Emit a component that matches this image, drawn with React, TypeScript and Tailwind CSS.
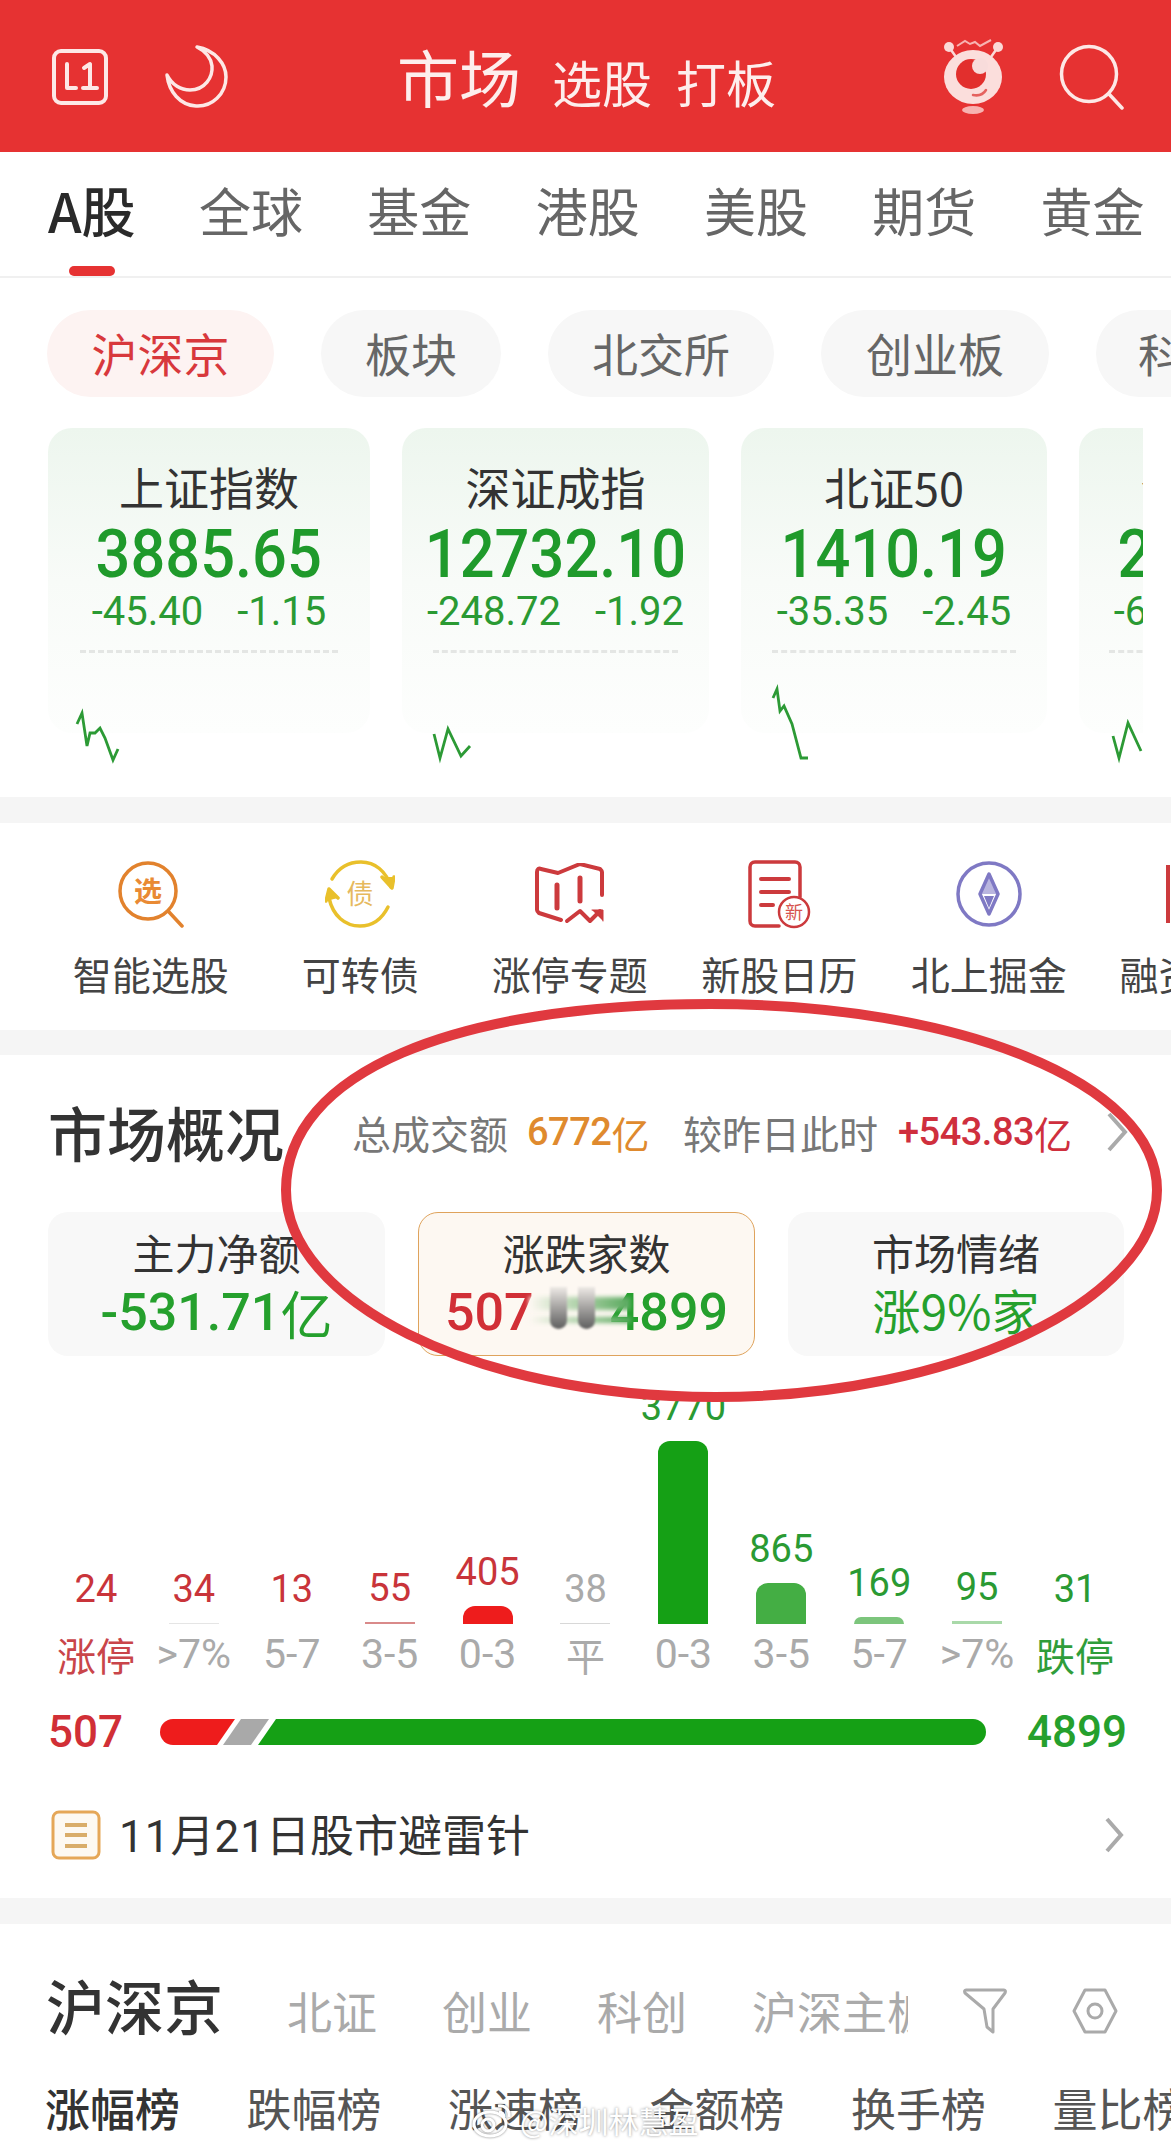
import React from "react";

const NUM = "font-['Roboto',sans-serif] font-medium";
const NUMR = "font-['Roboto',sans-serif] font-normal";

function L1Icon() {
  return (
    <svg width="58" height="58" viewBox="0 0 58 58" fill="none" stroke="#fde8e6" strokeWidth="4" strokeLinecap="round" strokeLinejoin="round">
      <rect x="3" y="3" width="52" height="52" rx="7" />
      <path d="M16 16v24h9M33 20l6-4v24M32 40h14" />
    </svg>
  );
}
function MoonIcon() {
  return (
    <svg width="66" height="66" viewBox="0 0 66 66" fill="none" stroke="#fde8e6" strokeWidth="3.5" strokeLinecap="round" strokeLinejoin="round">
      <path d="M33 3C51 6 62 20 62 33c0 17-14 30-30 29C16 61 5 48 3 31c5 10 14 15 23 15 15 0 23-13 22-24C47 14 41 7 33 3Z" />
    </svg>
  );
}
function MascotIcon() {
  return (
    <svg width="62" height="76" viewBox="0 0 62 76" fill="none">
      <path d="M14 7l8-5 5 3 5-2 5 4 11-6" stroke="#f7b3b1" strokeWidth="2" />
      <path d="M6 8l7 10M55 8l-7 10" stroke="#fbd9d7" strokeWidth="2.5" />
      <circle cx="6" cy="8" r="5" fill="#fbd9d7" />
      <circle cx="55" cy="8" r="5" fill="#fbd9d7" />
      <ellipse cx="30" cy="38" rx="29" ry="27" fill="#fbdedc" />
      <circle cx="28" cy="35" r="15" fill="#e22f2d" />
      <circle cx="37" cy="27" r="8" fill="#f8dcdb" />
      <path d="M30 56c5 1 10 0 13-5" stroke="#e5625f" strokeWidth="2.5" strokeLinecap="round" />
      <ellipse cx="30" cy="71" rx="11" ry="4" fill="#f7b3b1" />
    </svg>
  );
}
function SearchIcon() {
  return (
    <svg width="66" height="66" viewBox="0 0 66 66" fill="none" stroke="#fde8e6" strokeWidth="3.5" strokeLinecap="round">
      <circle cx="30" cy="30" r="27.5" />
      <path d="M50 50l13 14" />
    </svg>
  );
}

function Spark({ w, h, pts }: { w: number; h: number; pts: string }) {
  return (
    <svg width={w} height={h} viewBox={`0 0 ${w} ${h}`} fill="none" className="block overflow-visible">
      <polyline points={pts} stroke="#2c9a35" strokeWidth="2.8" strokeLinejoin="miter" />
    </svg>
  );
}

const cards = [
  { title: "上证指数", v: "3885.65", a: "-45.40", b: "-1.15", w: "w-[322px]", pts: "29,23 34,12 39,45 42,32 47,32 52,27 57,37 65,59 70,48" },
  { title: "深证成指", v: "12732.10", a: "-248.72", b: "-1.92", w: "w-[307px]", pts: "32,33 38,57 46,28 59,55 68,45" },
  { title: "北证50", v: "1410.19", a: "-35.35", b: "-2.45", w: "w-[306px]", pts: "32,-3 36,-12 39,10 43,5 51,23 60,57 67,57" },
  { title: "创业板指", v: "2920.05", a: "-67.24", b: "-2.02", w: "w-[304px]", pts: "34,35 40,57 49,22 62,50" },
];

function Card({ c }: { c: (typeof cards)[number] }) {
  return (
    <div className={`${c.w} shrink-0 h-[305px] rounded-[24px] bg-gradient-to-b from-[#edf6ee] via-[#f8fbf8] to-[#fdfefd] flex flex-col items-center pt-[36px]`}>
      <div className="text-[45px] leading-[46px] text-[#333]">{c.title}</div>
      <div className={`${NUM} inline-block scale-x-[.93] text-[66px] leading-[66px] mt-[12px] text-[#1f9a2b]`}>{c.v}</div>
      <div className={`${NUMR} text-[40px] leading-[40px] mt-[4px] text-[#2a9a33] flex gap-[34px]`}>
        <span className="inline-block">{c.a}</span>
        <span className="inline-block">{c.b}</span>
      </div>
      <div className="w-[80%] mt-[18px] border-t-[3px] border-dashed border-[#e4e6e4]" />
      <div className="self-start w-full h-0 mt-[48px]">
        <Spark w={120} h={50} pts={c.pts} />
      </div>
    </div>
  );
}

function ToolIcon({ kind }: { kind: number }) {
  if (kind === 0)
    return (
      <svg width="68" height="68" viewBox="0 0 68 68" fill="none" stroke="#e2822d" strokeWidth="3.5" strokeLinecap="round">
        <circle cx="31" cy="31" r="28" />
        <path d="M52 52l13 14" />
        <text x="31" y="42" textAnchor="middle" fontSize="28" fontWeight="700" fill="#e98a34" stroke="none" fontFamily="'Noto Sans CJK SC'">选</text>
      </svg>
    );
  if (kind === 1)
    return (
      <svg width="70" height="68" viewBox="0 0 70 68" fill="none" stroke="#e9c02b" strokeWidth="3.5" strokeLinecap="round" strokeLinejoin="round">
        <path d="M7 19C14 7 25 2 36 2c14 0 25 9 30 25" />
        <path d="M57 17l10 11 2-11" fill="#e9c02b" />
        <path d="M63 47c-6 12-16 19-28 19C20 66 8 56 4 38" />
        <path d="M1 41l3-12 9 9" fill="#e9c02b" />
        <text x="35" y="44" textAnchor="middle" fontSize="27" fill="#e6b95e" stroke="none" fontFamily="'Noto Sans CJK SC'">债</text>
      </svg>
    );
  if (kind === 2)
    return (
      <svg width="70" height="62" viewBox="0 0 70 62" fill="none" stroke="#cc3a3d" strokeWidth="4" strokeLinecap="round" strokeLinejoin="round">
        <path d="M26 57L4 50c-1-1-2-2-2-3V9c0-3 2-4 4-3l17 4L45 1l20 5c1 1 2 2 2 3v23" />
        <path d="M22 22v23M45 15v23" strokeWidth="5" />
        <path d="M32 58l13-10 10 10 10-10" />
        <path d="M57 47h11v11" fill="#cc3a3d" stroke="#cc3a3d" strokeWidth="1" />
      </svg>
    );
  if (kind === 3)
    return (
      <svg width="64" height="70" viewBox="0 0 64 70" fill="none" stroke="#cc3a3d" strokeWidth="3.5" strokeLinecap="round" strokeLinejoin="round">
        <path d="M32 67H8c-3 0-5-2-5-5V8c0-3 2-5 5-5h40c3 0 5 2 5 5v30" />
        <path d="M14 20h28M14 33h28M14 46h12" strokeWidth="4" />
        <circle cx="47" cy="53" r="15" fill="white" strokeWidth="2.5" />
        <text x="47" y="60" textAnchor="middle" fontSize="18" fill="#d7554f" stroke="none" fontFamily="'Noto Sans CJK SC'">新</text>
      </svg>
    );
  return (
    <svg width="68" height="68" viewBox="0 0 68 68" fill="none" stroke="#7f79c4" strokeWidth="3.5" strokeLinejoin="round">
      <circle cx="34" cy="34" r="31" />
      <path d="M34 14l9 20-9 20-9-20Z" />
      <path d="M34 14l9 20H25Z" fill="#7f79c4" fillOpacity="0.55" stroke="none" />
      <path d="M29 36h10l-5 12Z" fill="#7f79c4" stroke="none" />
    </svg>
  );
}

const tools = ["智能选股", "可转债", "涨停专题", "新股日历", "北上掘金"];

const bars = [
  { n: "24", l: "涨停", h: 0, c: "text-[#c9343a]", bar: "bg-transparent", lc: "text-[#c9454a]" },
  { n: "34", l: ">7%", h: 1, c: "text-[#c9343a]", bar: "bg-[#e5e5e5]", lc: "text-[#aaa]" },
  { n: "13", l: "5-7", h: 0, c: "text-[#c9343a]", bar: "bg-transparent", lc: "text-[#aaa]" },
  { n: "55", l: "3-5", h: 2, c: "text-[#c9343a]", bar: "bg-[#d98a8a]", lc: "text-[#aaa]" },
  { n: "405", l: "0-3", h: 18, c: "text-[#c9343a]", bar: "bg-[#ee1c1c]", lc: "text-[#aaa]" },
  { n: "38", l: "平", h: 1, c: "text-[#aaa]", bar: "bg-[#d8d8d8]", lc: "text-[#aaa]" },
  { n: "3770", l: "0-3", h: 183, c: "text-[#2a9a33]", bar: "bg-[#15a015]", lc: "text-[#aaa]" },
  { n: "865", l: "3-5", h: 41, c: "text-[#2a9a33]", bar: "bg-[#44ae44]", lc: "text-[#aaa]" },
  { n: "169", l: "5-7", h: 7, c: "text-[#2a9a33]", bar: "bg-[#7cc57c]", lc: "text-[#aaa]" },
  { n: "95", l: ">7%", h: 3, c: "text-[#2a9a33]", bar: "bg-[#a9d9a9]", lc: "text-[#aaa]" },
  { n: "31", l: "跌停", h: 0, c: "text-[#2a9a33]", bar: "bg-transparent", lc: "text-[#2f9d3a]" },
];

export default function App() {
  return (
    <div className="relative w-[1171px] h-[2148px] overflow-hidden bg-white font-['Noto_Sans_CJK_SC','Noto_Sans',sans-serif] font-normal">
      {/* header */}
      <header className="h-[152px] bg-[#e63232] flex items-center pl-[51px] pr-[46px] pt-[2px] text-[#fdeeed]">
        <div className="w-[113px]"><L1Icon /></div>
        <MoonIcon />
        <div className="ml-[167px] flex items-baseline -translate-y-[1px]">
          <span className="text-[62px] leading-none">市场</span>
          <span className="text-[50px] leading-none ml-[31px]">选股</span>
          <span className="text-[50px] leading-none ml-[24px]">打板</span>
        </div>
        <div className="ml-auto mr-[54px]"><MascotIcon /></div>
        <SearchIcon />
      </header>

      {/* market tabs */}
      <nav className="relative h-[126px] border-b-2 border-[#f0f0f0] flex pl-[48px] pt-[28px] text-[52px] leading-[60px] text-[#666] whitespace-nowrap">
        <span className="text-[#2a2a2a] font-medium text-[54px] w-[151px]">A股</span>
        <div className="flex gap-[64.3px]">
          {["全球", "基金", "港股", "美股", "期货", "黄金"].map((t) => (
            <span key={t}>{t}</span>
          ))}
        </div>
        <span className="absolute left-[69px] bottom-0 w-[46px] h-[10px] rounded-full bg-[#e63232]" />
      </nav>

      {/* sub pills */}
      <div className="flex gap-[47px] pl-[47px] pt-[32px] overflow-hidden text-[46px] leading-[84px] text-[#666] whitespace-nowrap">
        <span className="shrink-0 w-[227px] h-[87px] rounded-full bg-[#fdf3f2] text-[#d8383c] text-center">沪深京</span>
        <span className="shrink-0 w-[180px] h-[87px] rounded-full bg-[#f7f7f7] text-center">板块</span>
        <span className="shrink-0 w-[226px] h-[87px] rounded-full bg-[#f7f7f7] text-center">北交所</span>
        <span className="shrink-0 w-[228px] h-[87px] rounded-full bg-[#f7f7f7] text-center">创业板</span>
        <span className="shrink-0 w-[224px] h-[87px] rounded-full bg-[#f7f7f7] pl-[42px]">科创板</span>
      </div>

      {/* index cards */}
      <div className="ml-[48px] mr-[28px] mt-[31px] h-[369px] flex gap-[32px] overflow-hidden">
        {cards.map((c) => (
          <Card key={c.title} c={c} />
        ))}
      </div>

      <div className="h-[26px] bg-[#f5f5f5]" />

      {/* tools */}
      <div className="h-[207px] flex pl-[46px] pt-[37px] overflow-hidden whitespace-nowrap">
        {tools.map((t, i) => (
          <div key={t} className="w-[209.5px] shrink-0 flex flex-col items-center">
            <div className="h-[68px] flex items-center"><ToolIcon kind={i} /></div>
            <div className="text-[39px] leading-[46px] mt-[22px] text-[#444]">{t}</div>
          </div>
        ))}
        <div className="shrink-0 flex flex-col ml-[26px]">
          <div className="h-[68px] pl-[46px] flex items-center"><div className="w-[4px] h-[58px] bg-[#cc3a3d]" /></div>
          <div className="text-[39px] leading-[46px] mt-[22px] text-[#444]">融资融券</div>
        </div>
      </div>

      <div className="h-[25px] bg-[#f5f5f5]" />

      {/* market overview */}
      <section className="h-[843px]">
        <div className="flex items-center pl-[48px] pt-[42px] whitespace-nowrap">
          <h2 className="text-[59px] leading-[70px] font-medium text-[#333] w-[304px]">市场概况</h2>
          <span className="text-[39px] text-[#777]">总成交额</span>
          <span className={`${NUM} text-[38px] text-[#df8a2e] ml-[19px] flex items-center tracking-[-0.5px]`}>6772<span className="font-['Noto_Sans_CJK_SC'] font-normal">亿</span></span>
          <span className="text-[39px] text-[#777] ml-[34px]">较昨日此时</span>
          <span className={`${NUM} text-[38px] text-[#cf2f3d] ml-[20px] flex items-center tracking-[-0.5px]`}>+543.83<span className="font-['Noto_Sans_CJK_SC'] font-normal">亿</span></span>
          <svg className="ml-[34px]" width="22" height="42" viewBox="0 0 22 42" fill="none" stroke="#aaa" strokeWidth="4"><path d="M3 3l16 18L3 39" /></svg>
        </div>

        <div className="flex gap-[33px] pl-[48px] pt-[45px] h-[189px]">
          <div className="w-[337px] h-[144px] rounded-[20px] bg-[#f8f8f8] flex flex-col items-center pt-[17px]">
            <div className="text-[42px] leading-[46px] text-[#333]">主力净额</div>
            <div className={`${NUM} text-[52px] leading-[60px] text-[#25a02d] mt-[8px] flex items-center`}>-531.71<span className="font-['Noto_Sans_CJK_SC'] font-normal">亿</span></div>
          </div>
          <div className="w-[337px] h-[144px] rounded-[20px] border border-[#dfa35c] bg-[#fdf8f2] flex flex-col items-center pt-[16px]">
            <div className="text-[42px] leading-[46px] text-[#333]">涨跌家数</div>
            <div className={`${NUM} relative w-full text-[52px] leading-[60px] mt-[8px] flex justify-between px-[26px]`}>
              <span className="text-[#d12f36]">507</span>
              <span className="text-[#25a02d]">4899</span>
              <span className="absolute left-[110px] top-[14px] w-[102px] h-[13px] blur-[2px] bg-gradient-to-r from-[#fdf8f2] to-[#55a85c]" />
              <span className="absolute left-[110px] top-[34px] w-[102px] h-[6px] blur-[2px] bg-gradient-to-r from-[#fdf8f2] to-[#55a85c]" />
              <span className="absolute left-[131px] top-[4px] flex gap-[11px] blur-[1px]">
                <span className="w-[17px] h-[42px] rounded-b-full bg-gradient-to-b from-[#eeeae6] to-[#5f5f5f]" />
                <span className="w-[17px] h-[42px] rounded-b-full bg-gradient-to-b from-[#eeeae6] to-[#5f5f5f]" />
              </span>
            </div>
          </div>
          <div className="w-[336px] h-[144px] rounded-[20px] bg-[#f8f8f8] flex flex-col items-center pt-[17px]">
            <div className="text-[42px] leading-[46px] text-[#333]">市场情绪</div>
            <div className="text-[48px] leading-[60px] text-[#25a02d] mt-[4px]">涨9%家</div>
          </div>
        </div>

        {/* bars */}
        <div className="grid grid-cols-11 px-[47px] h-[262px] items-end mt-[6px] w-[1171px]">
          {bars.map((b, i) => (
            <div key={i} className="flex flex-col items-center">
              <div className={`${NUMR} text-[38px] leading-[40px] mb-[14px] ${b.c}`}>{b.n}</div>
              <div className={`w-[50px] ${b.h > 5 ? "rounded-t-[12px]" : ""} ${b.bar}`} style={{ height: b.h === 0 ? 1 : b.h }} />
            </div>
          ))}
        </div>
        <div className="grid grid-cols-11 px-[47px] mt-[7px] w-[1171px]">
          {bars.map((b, i) => (
            <div key={i} className={`text-center leading-[46px] whitespace-nowrap ${b.lc} ${i === 0 || i === 5 || i === 10 ? "text-[39px]" : "text-[41px] font-['Roboto',sans-serif]"}`}>{b.l}</div>
          ))}
        </div>

        {/* summary */}
        <div className="flex items-center pl-[48px] pt-[30px] h-[80px]">
          <span className={`${NUM} w-[112px] text-[44px] leading-none text-[#d12f36]`}>507</span>
          <svg width="826" height="26" viewBox="0 0 826 26" className="block">
            <path d="M13 0H75L57 26H13a13 13 0 0 1 0-26Z" fill="#ee1c1c" />
            <path d="M81 0h28L91 26H63Z" fill="#a9a9a9" />
            <path d="M116 0H813a13 13 0 0 1 0 26H98Z" fill="#15a015" />
          </svg>
          <span className={`${NUM} ml-[41px] text-[44px] leading-none text-[#25a02d]`}>4899</span>
        </div>

        {/* notice */}
        <div className="flex items-center pl-[51px] pr-[47px] pt-[49px]">
          <svg width="50" height="50" viewBox="0 0 50 50" fill="none">
            <rect x="2" y="2" width="46" height="46" rx="6" fill="#fdf9f2" stroke="#e5a758" strokeWidth="3" />
            <path d="M14 15h22M14 25h22M14 36h22" stroke="#d9ad6a" strokeWidth="4" />
          </svg>
          <span className="ml-[18px] text-[44px] leading-[54px] text-[#333]">
            <span className="font-['Roboto',sans-serif] text-[44px] tracking-[1px]">11</span>月<span className="font-['Roboto',sans-serif] text-[44px] tracking-[1px]">21</span>日股市避雷针
          </span>
          <svg className="ml-auto" width="20" height="38" viewBox="0 0 20 38" fill="none" stroke="#aaa" strokeWidth="4"><path d="M3 3l14 16L3 35" /></svg>
        </div>
      </section>

      <div className="h-[26px] bg-[#f5f5f5]" />

      {/* list heading */}
      <section className="relative overflow-hidden">
        <div className="flex items-center pl-[46px] pt-[46px] whitespace-nowrap">
          <h2 className="text-[59px] leading-[70px] mb-[12px] font-medium text-[#333] w-[241px]">沪深京</h2>
          <div className="flex text-[45px] leading-[60px] text-[#aaa] gap-[65px]">
            <span>北证</span>
            <span>创业</span>
            <span>科创</span>
          </div>
          <span className="ml-[65px] w-[156px] overflow-hidden text-[45px] leading-[60px] text-[#aaa]">沪深主板</span>
          <svg className="ml-[55px]" width="44" height="46" viewBox="0 0 44 46" fill="none" stroke="#aaa" strokeWidth="3" strokeLinejoin="round"><path d="M3 2h38c1 0 2 1 1 3L30 21v23l-6-5-3-18L2 5c-1-2 0-3 1-3Z" /></svg>
          <svg className="ml-[65px]" width="46" height="46" viewBox="0 0 46 46" fill="none" stroke="#aaa" strokeWidth="3" strokeLinejoin="round"><path d="M13 2h20l11 21-11 21H13L2 23Z" /><circle cx="23" cy="23" r="7" /></svg>
        </div>
        <div className="flex gap-[66.5px] pl-[45px] pt-[26px] text-[45px] leading-[60px] text-[#555] whitespace-nowrap">
          <span className="font-medium text-[#333] shrink-0">涨幅榜</span>
          <span className="shrink-0">跌幅榜</span>
          <span className="shrink-0">涨速榜</span>
          <span className="shrink-0">金额榜</span>
          <span className="shrink-0">换手榜</span>
          <span className="shrink-0">量比榜</span>
        </div>
      </section>

      {/* hand drawn ring */}
      <svg className="absolute left-[278px] top-[992px]" width="893" height="414" viewBox="0 0 893 414" fill="none">
        <path d="M8 198C8 80 177 12 432 12C678 12 879 90 879 198C879 307 678 405 437 405C192 405 8 307 8 198Z" stroke="#e0393f" strokeWidth="10" />
      </svg>

      {/* watermark */}
      <div className="absolute left-[472px] top-[2098px] flex items-center text-white text-[30px] leading-[44px] [text-shadow:0_0_3px_rgba(0,0,0,0.45)]">
        <svg width="42" height="38" viewBox="0 0 42 38" fill="none" stroke="white" strokeWidth="3" className="drop-shadow-[0_0_1px_rgba(0,0,0,0.5)]">
          <ellipse cx="18" cy="23" rx="16" ry="12" />
          <circle cx="16" cy="24" r="6" />
          <path d="M26 5c7-1 12 4 11 11M27 11c3 0 5 2 5 5" />
        </svg>
        <span className="ml-[6px]">@深圳林慧盈</span>
      </div>
    </div>
  );
}
